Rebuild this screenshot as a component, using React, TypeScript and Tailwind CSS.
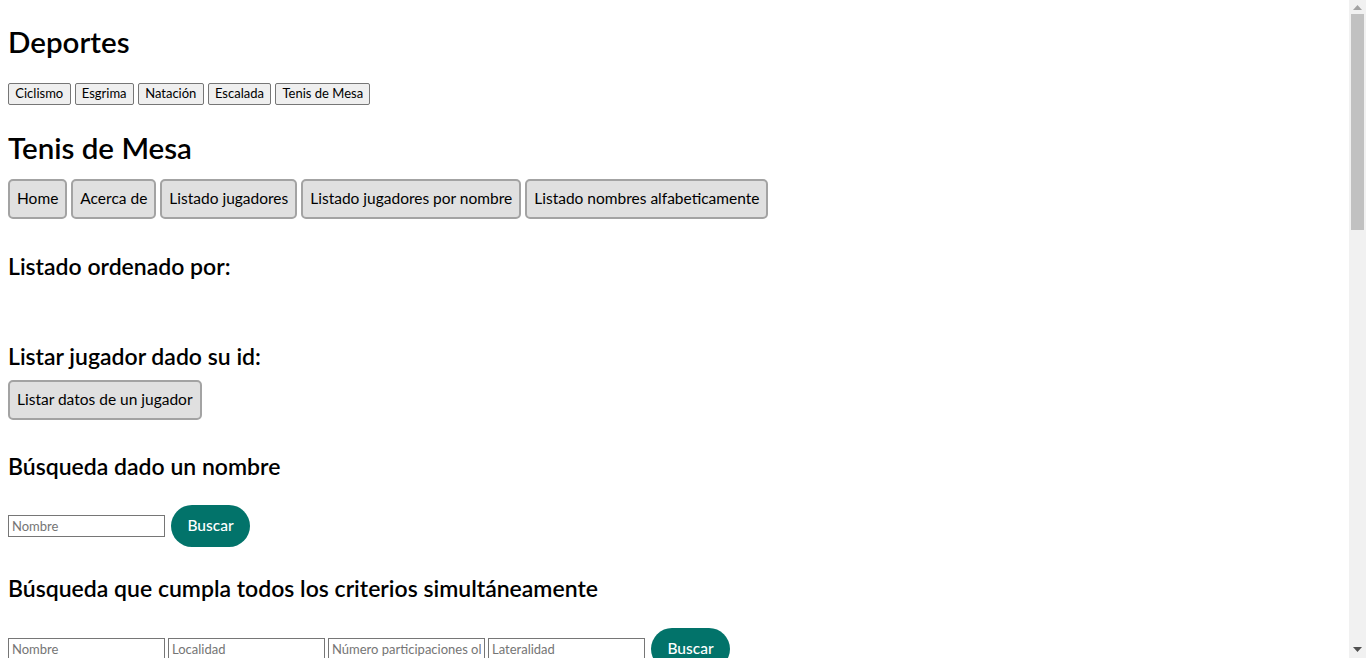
const deportes = ["Ciclismo", "Esgrima", "Natación", "Escalada", "Tenis de Mesa"];
const menu = [
  "Home",
  "Acerca de",
  "Listado jugadores",
  "Listado jugadores por nombre",
  "Listado nombres alfabeticamente",
];
const criterios = ["Nombre", "Localidad", "Número participaciones olímpicas", "Lateralidad"];

function Titulo({ children, className = "" }: { children: React.ReactNode; className?: string }) {
  return <h3 className={`text-[23px] font-semibold leading-[30px] text-black ${className}`}>{children}</h3>;
}

function BotonGris({ children }: { children: React.ReactNode }) {
  return (
    <button className="h-10 rounded-[5px] border-2 border-[#a3a3a3] bg-[#e0e0e0] px-[7px] text-[15.5px] text-black">
      {children}
    </button>
  );
}

function Buscar({ className = "" }: { className?: string }) {
  return (
    <button
      className={`h-[42px] w-[79px] rounded-full bg-[#02736a] text-[15.5px] font-medium text-white ${className}`}
    >
      Buscar
    </button>
  );
}

function Campo({ placeholder }: { placeholder: string }) {
  return (
    <input
      placeholder={placeholder}
      className="h-[22px] w-[157px] border border-[#767676] bg-white px-[3px] text-[13px] placeholder:text-[#757575]"
    />
  );
}

// barra de desplazamiento del navegador
function Scrollbar() {
  return (
    <div className="fixed right-0 top-0 flex h-screen w-[17px] flex-col items-center bg-[#f1f1f1]">
      <svg width="9" height="5" viewBox="0 0 9 5" className="mt-[5px]">
        <path d="M0 5 L4.5 0 L9 5 Z" fill="#a3a3a3" />
      </svg>
      <div className="mt-[4px] h-[216px] w-[13px] bg-[#c1c1c1]" />
      <div className="flex-1" />
      <svg width="9" height="5" viewBox="0 0 9 5" className="mb-[6px]">
        <path d="M0 0 L9 0 L4.5 5 Z" fill="#505050" />
      </svg>
    </div>
  );
}

export default function App() {
  return (
    <div className="min-h-[1900px] bg-white px-2 font-['Lato','Noto_Sans',sans-serif] text-black">
      <h1 className="pt-[22px] text-[29.5px] font-semibold leading-[40px]">Deportes</h1>

      <div className="mt-[21px] flex gap-1">
        {deportes.map((d) => (
          <button
            key={d}
            className="h-[22px] rounded-[2px] border border-[#767676] bg-[#efefef] px-[6.3px] text-[13px] text-black"
          >
            {d}
          </button>
        ))}
      </div>

      <h2 className="mt-[23px] text-[29.5px] font-semibold leading-[40px]">Tenis de Mesa</h2>

      <nav className="mt-[11px] flex gap-1">
        {menu.map((m) => (
          <BotonGris key={m}>{m}</BotonGris>
        ))}
      </nav>

      <Titulo className="mt-[32px]">Listado ordenado por:</Titulo>

      <Titulo className="mt-[60px]">Listar jugador dado su id:</Titulo>
      <div className="mt-[9px]">
        <BotonGris>Listar datos de un jugador</BotonGris>
      </div>

      <Titulo className="mt-[31px]">Búsqueda dado un nombre</Titulo>
      <div className="mt-[24px] flex items-center gap-[6px]">
        <Campo placeholder="Nombre" />
        <Buscar />
      </div>

      <Titulo className="mt-[26px]">Búsqueda que cumpla todos los criterios simultáneamente</Titulo>
      <div className="mt-[25px] flex items-center gap-[3px]">
        {criterios.map((c) => (
          <Campo key={c} placeholder={c} />
        ))}
        <Buscar className="ml-[3px]" />
      </div>

      <Scrollbar />
    </div>
  );
}
